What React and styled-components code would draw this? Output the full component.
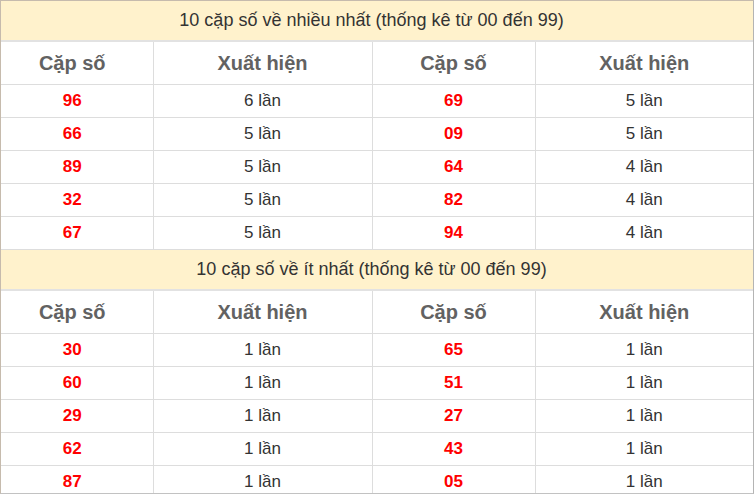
import React from "react";
import styled, { createGlobalStyle } from "styled-components";

const Global = createGlobalStyle`
  html, body { margin: 0; padding: 0; background: #fff; }
  body { font-family: "Liberation Sans", Arial, sans-serif; }
`;

const Frame = styled.div`
  width: 752px;
  height: 492px;
  overflow: hidden;
  border-left: 1px solid #c6bbad;
  border-top: 1px solid #c6bbad;
  border-right: 1px solid #b4b4b4;
  border-bottom: 1px solid #c2c2c2;
`;

const Table = styled.table`
  width: 752px;
  table-layout: fixed;
  border-collapse: collapse;
`;

const TitleCell = styled.td`
  background: #fff2cc;
  height: 39px;
  padding: 0 11px 0 0;
  text-align: center;
  font-size: 18px;
  color: #333;
  border-bottom: 2px solid #e2e2e2;
`;

const HeadCell = styled.th`
  height: 42px;
  padding: 0;
  text-align: center;
  font-size: 20px;
  font-weight: bold;
  color: #626262;
  border: 1px solid #ddd;
  border-top: none;
  &:first-child { border-left: none; padding-right: 9px; }
  &:last-child { border-right: none; }
`;

const Cell = styled.td`
  height: 32px;
  padding: 0;
  text-align: center;
  font-size: 17px;
  color: ${(p) => (p.$num ? "#ff0000" : "#333")};
  font-weight: ${(p) => (p.$num ? "bold" : "normal")};
  border: 1px solid #ddd;
  &:first-child { border-left: none; padding-right: 9px; }
  &:last-child { border-right: none; }
`;

const most = [
  ["96", "6 lần", "69", "5 lần"],
  ["66", "5 lần", "09", "5 lần"],
  ["89", "5 lần", "64", "4 lần"],
  ["32", "5 lần", "82", "4 lần"],
  ["67", "5 lần", "94", "4 lần"],
];

const least = [
  ["30", "1 lần", "65", "1 lần"],
  ["60", "1 lần", "51", "1 lần"],
  ["29", "1 lần", "27", "1 lần"],
  ["62", "1 lần", "43", "1 lần"],
  ["87", "1 lần", "05", "1 lần"],
];

function Section({ title, rows }) {
  return (
    <>
      <tr>
        <TitleCell colSpan={4}>{title}</TitleCell>
      </tr>
      <tr>
        <HeadCell>Cặp số</HeadCell>
        <HeadCell>Xuất hiện</HeadCell>
        <HeadCell>Cặp số</HeadCell>
        <HeadCell>Xuất hiện</HeadCell>
      </tr>
      {rows.map((r, i) => (
        <tr key={i}>
          <Cell $num>{r[0]}</Cell>
          <Cell>{r[1]}</Cell>
          <Cell $num>{r[2]}</Cell>
          <Cell>{r[3]}</Cell>
        </tr>
      ))}
    </>
  );
}

export default function App() {
  return (
    <>
      <Global />
      <Frame>
        <Table>
          <colgroup>
            <col style={{ width: 152 }} />
            <col style={{ width: 219 }} />
            <col style={{ width: 163 }} />
            <col style={{ width: 218 }} />
          </colgroup>
          <tbody>
            <Section title="10 cặp số về nhiều nhất (thống kê từ 00 đến 99)" rows={most} />
            <Section title="10 cặp số về ít nhất (thống kê từ 00 đến 99)" rows={least} />
          </tbody>
        </Table>
      </Frame>
    </>
  );
}
